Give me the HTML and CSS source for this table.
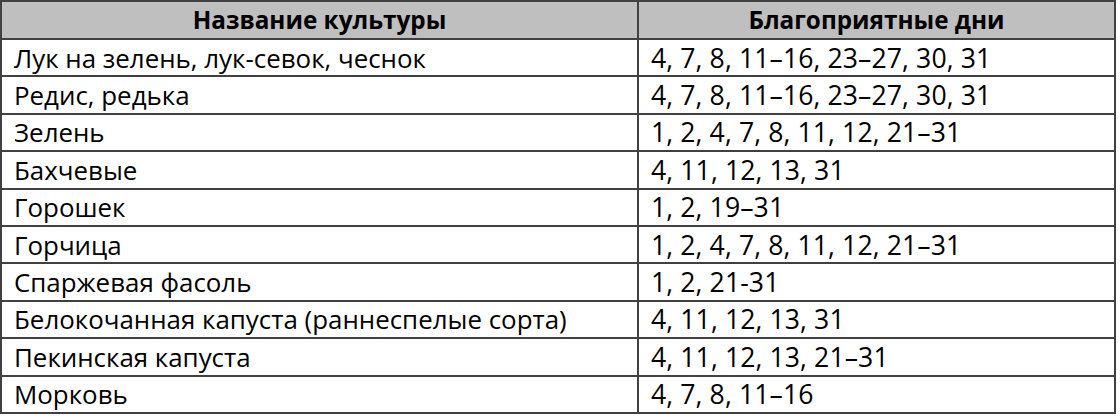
FILE: index.html
```html
<!DOCTYPE html>
<html lang="ru">
<head>
<meta charset="utf-8">
<link rel="stylesheet" href="styles.css">
</head>
<body>
<table class="crops">
  <thead>
    <tr><th class="c1">Название культуры</th><th class="c2">Благоприятные дни</th></tr>
  </thead>
  <tbody>
    <tr><td>Лук на зелень, лук-севок, чеснок</td><td class="days">4, 7, 8, 11–16, 23–27, 30, 31</td></tr>
    <tr><td>Редис, редька</td><td class="days">4, 7, 8, 11–16, 23–27, 30, 31</td></tr>
    <tr><td>Зелень</td><td class="days">1, 2, 4, 7, 8, 11, 12, 21–31</td></tr>
    <tr><td>Бахчевые</td><td class="days">4, 11, 12, 13, 31</td></tr>
    <tr><td>Горошек</td><td class="days">1, 2, 19–31</td></tr>
    <tr><td>Горчица</td><td class="days">1, 2, 4, 7, 8, 11, 12, 21–31</td></tr>
    <tr><td>Спаржевая фасоль</td><td class="days">1, 2, 21-31</td></tr>
    <tr><td>Белокочанная капуста (раннеспелые сорта)</td><td class="days">4, 11, 12, 13, 31</td></tr>
    <tr><td>Пекинская капуста</td><td class="days">4, 11, 12, 13, 21–31</td></tr>
    <tr><td>Морковь</td><td class="days">4, 7, 8, 11–16</td></tr>
  </tbody>
</table>
</body>
</html>
```
FILE: styles.css
```css
html, body {
  margin: 0;
  padding: 0;
  background: #ffffff;
}
.crops {
  border-collapse: collapse;
  width: 1116px;
  table-layout: fixed;
  font-family: "Open Sans", "Noto Sans", sans-serif;
  font-size: 25.9px;
  color: #000000;
}
.crops th, .crops td {
  border: 2px solid #404040;
  height: 37.4px;
  padding: 0 12px;
  box-sizing: border-box;
  white-space: nowrap;
  line-height: 30px;
  vertical-align: middle;
}
.crops th {
  background: #bfbfbf;
  font-weight: 700;
  font-size: 24.3px;
  text-align: center;
  height: 38px;
}
.crops .c1 { width: 637px; }
.crops td { text-align: left; }
.crops .days { font-size: 26.6px; letter-spacing: 0.1px; }
```
